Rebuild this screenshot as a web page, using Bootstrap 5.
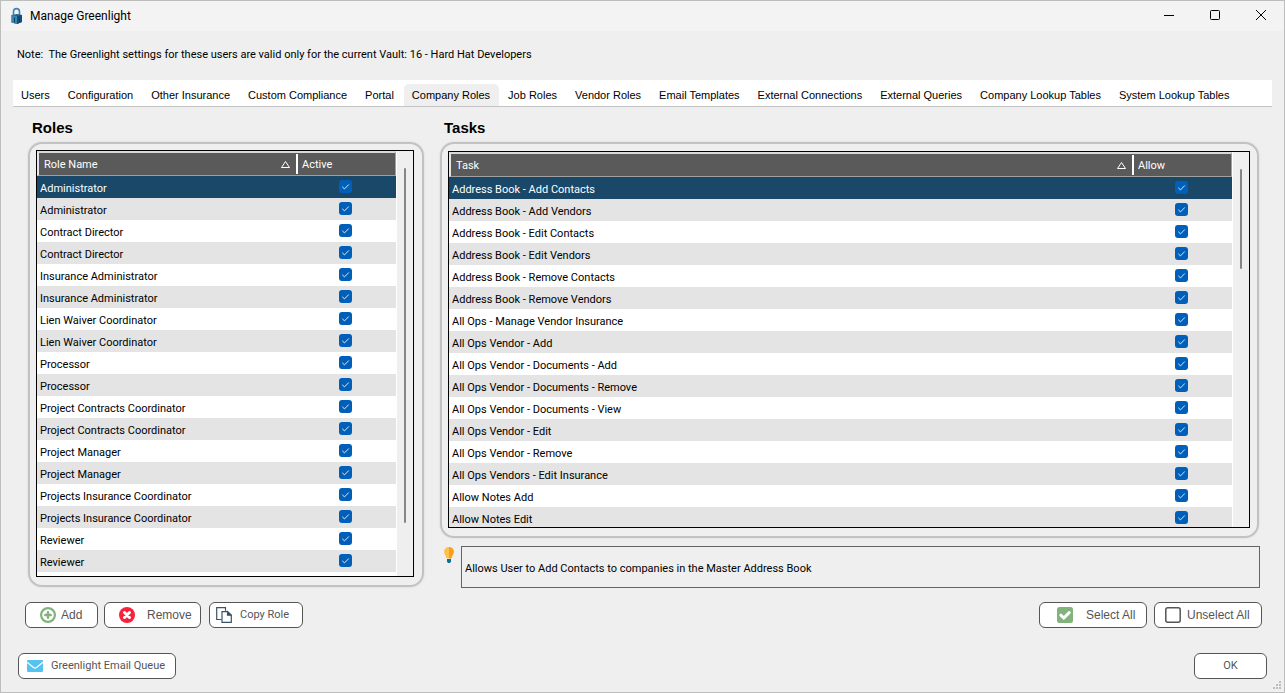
<!DOCTYPE html>
<html lang="en">
<head>
<meta charset="utf-8">
<meta name="viewport" content="width=device-width, initial-scale=1">
<title>Manage Greenlight</title>
<link href="https://cdn.jsdelivr.net/npm/bootstrap@5.3.0/dist/css/bootstrap.min.css" rel="stylesheet">
<style>
body { font-family: Roboto, "Liberation Sans", sans-serif; font-size: 11px; line-height: 16px; color: #000; background: #efefef; }
.app-window { border: 1px solid #bdbdbd; }
.title-strip { background: #f3f3f3; height: 30px; }
.app-name { font-size: 12px; font-weight: 400; line-height: 16px; margin-left: 6px; }
.win-btn { width: 46px; height: 30px; border: 0; background: none; padding: 0; display: flex; align-items: center; justify-content: center; }
.note { padding: 16px 16px 17px; }
.tab-strip { margin: 0 12px; background: #fff; border-bottom: 1px solid #c4c4c4; font-family: "Liberation Sans", sans-serif; }
.tab-strip .nav-link { color: #000; border: 0; border-radius: 5px 5px 0 0; padding: 3px 9px 3px 8px; margin-top: 4px; margin-right: 1px; font-size: 11px; }
.tab-strip .nav-link.active { background: #efefef; color: #000; }
.panes { display: grid; grid-template-columns: minmax(0, 396fr) minmax(0, 820fr); column-gap: 16px; padding: 11px 24px 0 27px; min-height: 0; }
.pane { min-height: 0; }
.pane h2 { font-family: "Liberation Sans", sans-serif; font-size: 15px; font-weight: 700; line-height: 20px; margin: 0 0 4px 4px; }
.group-box { border: 2px solid #c2c2c2; border-radius: 14px; box-shadow: 0 0 2px #d0d0d0; padding: 6px 8px 8px 6px; min-height: 0; }
.roles-box { margin-bottom: 1px; }
.tasks-box { padding-top: 7px; padding-right: 7px; margin-right: 1px; }
.grid-frame { border: 1px solid #000; background: #fff; min-height: 0; }
.grid-body { min-height: 0; margin-right: 1px; }
.data-grid { width: 100%; border-collapse: separate; border-spacing: 0; table-layout: fixed; }
.data-grid th { height: 25px; padding: 2px 7px 0; font-weight: 400; color: #fff; background: #5a5a5a; border-top: 2px solid #d9d9d9; border-bottom: 1px solid #a0a0a0; }
.data-grid th:first-child { border-left: 2px solid #e6e6e6; padding: 2px 6px 0 5px; }
.data-grid th:last-child { padding: 0; border-right: 1px solid #a0a0a0; }
.data-grid .flag-col { width: 100px; }
.col-rule { width: 2px; height: 20px; background: #fff; margin-right: 4px; }
.flag-name { padding-top: 2px; }
.data-grid td { height: 22px; padding: 3px 0 0 3px; line-height: 16px; white-space: nowrap; vertical-align: middle; }
.data-grid td label { display: block; }
.data-grid td:last-child { padding: 0 2px 1px 0; text-align: center; }
.data-grid tbody tr:nth-child(even) { background: #e4e4e4; }
.data-grid tbody tr.chosen { background: #1a4868; color: #fff; }
.data-grid .form-check-input { display: block; width: 13px; height: 13px; margin: 0 auto; border-radius: 3px; border: 0; float: none; }
.data-grid .form-check-input:checked { background-color: #005fb8; background-size: 13px; background-image: url("data:image/svg+xml,%3csvg xmlns='http://www.w3.org/2000/svg' viewBox='0 0 13 13'%3e%3cpath d='M3.3 6.8l2.2 2.1 4.3-4.4' fill='none' stroke='%23fff' stroke-opacity='.85'/%3e%3c/svg%3e"); }
.scroll-track { width: 16px; background: #efefef; padding: 17px 7px 0; flex: none; }
.scroll-thumb { width: 2px; background: #858585; border-radius: 1px; }
.hint { margin-top: 8px; }
.hint svg { width: 16px; flex: none; }
.hint-text { border: 1px solid #646464; padding: 14px 3px 10px; margin-left: 5px; }
.tool-btn { display: flex; align-items: center; height: 26px; padding: 0; border: 1px solid #555; border-radius: 6px; background: #fff; color: #555; font-size: 11px; line-height: 16px; white-space: nowrap; }
.tool-btn:hover { background: #f7f7f7; border-color: #555; color: #555; }
.tool-btn svg { flex: none; }
.wide-face { font-family: "Liberation Sans", sans-serif; font-size: 12px; }
.w-add { width: 73px; padding-left: 14px; gap: 5px; margin-right: 6px; }
.w-remove { width: 97px; padding-left: 14px; gap: 12px; }
.w-copy { width: 94px; padding-left: 6px; gap: 8px; }
.w-select { width: 108px; padding-left: 17px; gap: 13px; margin-right: 7px; }
.w-unselect { width: 108px; padding-left: 10px; gap: 6px; }
.w-queue { width: 158px; padding-left: 8px; gap: 8px; }
.w-ok { width: 73px; justify-content: center; }
.actions { padding: 14px 22px 25px 24px; }
.footer-row { padding: 0 17px 13px; }
.size-grip { right: 3px; bottom: 3px; }
</style>
</head>
<body>
<div class="app-window d-flex flex-column vh-100 position-relative">
  <header class="title-strip d-flex align-items-center flex-shrink-0">
    <svg class="ms-2" width="15" height="18" viewBox="0 0 15 18" aria-hidden="true">
      <path d="M4.500 9V4.800Q4.500 1.600 7.500 1.600T10.500 4.800V9" fill="none" stroke="#3d86b2" stroke-width="1.600"/>
      <path d="M2.500 8L8 7l5 1v7L8 17l-5.500-1.500z" fill="#20628f"/>
      <path d="M2.500 8L8 9v8l-5.500-1.500z" fill="#3a86b4"/>
      <path d="M8 9l5-1v7l-5 2z" fill="#174d75"/>
      <path d="M5.500 10.500v5M10.500 10v5" stroke="#0f3f64"/>
    </svg>
    <h1 class="app-name mb-0">Manage Greenlight</h1>
    <div class="d-flex ms-auto">
      <button type="button" class="win-btn" aria-label="Minimize"><svg width="12" height="12"><path d="M1 5.500h10" stroke="#000"/></svg></button>
      <button type="button" class="win-btn" aria-label="Maximize"><svg width="12" height="12"><rect x="1.500" y=".5" width="9" height="9" rx="1" fill="none" stroke="#000"/></svg></button>
      <button type="button" class="win-btn" aria-label="Close"><svg width="12" height="12"><path d="M1 0l10 10M11 0L1 10" stroke="#000"/></svg></button>
    </div>
  </header>

  <p class="note mb-0 flex-shrink-0">Note:&nbsp; The Greenlight settings for these users are valid only for the current Vault: 16 - Hard Hat Developers</p>

  <nav class="tab-strip nav flex-shrink-0">
    <a class="nav-link" href="#">Users</a>
    <a class="nav-link" href="#">Configuration</a>
    <a class="nav-link" href="#">Other Insurance</a>
    <a class="nav-link" href="#">Custom Compliance</a>
    <a class="nav-link" href="#">Portal</a>
    <a class="nav-link active" href="#" aria-current="page">Company Roles</a>
    <a class="nav-link" href="#">Job Roles</a>
    <a class="nav-link" href="#">Vendor Roles</a>
    <a class="nav-link" href="#">Email Templates</a>
    <a class="nav-link" href="#">External Connections</a>
    <a class="nav-link" href="#">External Queries</a>
    <a class="nav-link" href="#">Company Lookup Tables</a>
    <a class="nav-link" href="#">System Lookup Tables</a>
  </nav>

  <main class="panes flex-grow-1">
    <section class="pane d-flex flex-column">
      <h2>Roles</h2>
      <div class="group-box roles-box d-flex flex-grow-1">
        <div class="grid-frame d-flex flex-grow-1 overflow-hidden">
          <div class="grid-body flex-grow-1 overflow-hidden">
            <table class="data-grid">
              <thead><tr>
                <th><div class="d-flex justify-content-between align-items-center">Role Name<svg width="9" height="8" viewBox="0 0 9 8"><path d="M.5 6.500L4.500.5l4 6z" fill="none" stroke="#fff"/></svg></div></th>
                <th class="flag-col"><div class="d-flex align-items-center"><span class="col-rule"></span><span class="flag-name">Active</span></div></th>
              </tr></thead>
              <tbody id="roles"></tbody>
            </table>
          </div>
          <div class="scroll-track"><div class="scroll-thumb" style="height: 87%"></div></div>
        </div>
      </div>
    </section>

    <section class="pane d-flex flex-column">
      <h2>Tasks</h2>
      <div class="group-box tasks-box d-flex flex-grow-1">
        <div class="grid-frame d-flex flex-grow-1 overflow-hidden">
          <div class="grid-body flex-grow-1 overflow-hidden">
            <table class="data-grid">
              <thead><tr>
                <th><div class="d-flex justify-content-between align-items-center">Task<svg width="9" height="8" viewBox="0 0 9 8"><path d="M.5 6.500L4.500.5l4 6z" fill="none" stroke="#fff"/></svg></div></th>
                <th class="flag-col"><div class="d-flex align-items-center"><span class="col-rule"></span><span class="flag-name">Allow</span></div></th>
              </tr></thead>
              <tbody id="tasks"></tbody>
            </table>
          </div>
          <div class="scroll-track"><div class="scroll-thumb" style="height: 28%"></div></div>
        </div>
      </div>
      <div class="hint d-flex">
        <svg height="18" viewBox="0 0 16 18" aria-hidden="true">
          <path d="M9 1C6 1 4 3.200 4 5.800c0 2.400 2 3.600 2.500 6.700H9z" fill="#ffc14d"/>
          <path d="M9 1c3 0 5 2.200 5 4.800 0 2.400-2 3.600-2.500 6.700H9z" fill="#f9a11b"/>
          <path d="M7 13h4v2.500L10 17H8l-1-1.500z" fill="#0a7196"/>
        </svg>
        <div class="hint-text flex-grow-1">Allows User to Add Contacts to companies in the Master Address Book</div>
      </div>
    </section>
  </main>

  <div class="actions d-flex flex-shrink-0">
    <button type="button" class="btn tool-btn wide-face w-add">
      <svg width="16" height="16" viewBox="0 0 16 16"><circle cx="8" cy="8" r="6.900" fill="none" stroke="#82b37c" stroke-width="2.200"/><path d="M8 5.200v5.600M5.200 8h5.600" stroke="#82b37c" stroke-width="2.400" stroke-linecap="round"/></svg>Add</button>
    <button type="button" class="btn tool-btn wide-face w-remove">
      <svg width="16" height="16" viewBox="0 0 16 16"><circle cx="8" cy="8" r="8" fill="#f8213a"/><path d="M5.500 5.500l5 5M10.500 5.500l-5 5" stroke="#fff" stroke-width="3" stroke-linecap="round"/></svg>Remove</button>
    <button type="button" class="btn tool-btn w-copy ms-2">
      <svg width="16" height="16" viewBox="0 0 16 16" fill="none" stroke="#3b5468" stroke-width="1.200"><path d="M5.500 12.500H.7V.7h8.800v3"/><path d="M6 4.600h5.500l3.800 3.600v7.100H6z" fill="#fff"/><path d="M11.500 4.600v3.600h3.800z" fill="#1a4868"/></svg>Copy Role</button>
    <button type="button" class="btn tool-btn wide-face w-select ms-auto">
      <svg width="16" height="16" viewBox="0 0 16 16"><rect width="16" height="16" rx="2.500" fill="#82b37c"/><path d="M3.800 8.200l3 2.800 5.400-5.400" fill="none" stroke="#fff" stroke-width="3" stroke-linecap="round"/></svg>Select All</button>
    <button type="button" class="btn tool-btn wide-face w-unselect">
      <svg width="16" height="16" viewBox="0 0 16 16"><rect x=".8" y=".8" width="14.400" height="14.400" rx="2" fill="#fff" stroke="#555" stroke-width="1.500"/></svg>Unselect All</button>
  </div>

  <footer class="footer-row d-flex justify-content-between flex-shrink-0">
    <button type="button" class="btn tool-btn w-queue">
      <svg width="16" height="12" viewBox="0 0 16 12"><rect width="16" height="12" rx="1" fill="#55c3f1"/><path d="M0 2.200L6.500 7.500q1.500 1 3 0L16 2.200" fill="none" stroke="#fff" stroke-width="1.300"/></svg>Greenlight Email Queue</button>
    <button type="button" class="btn tool-btn w-ok">OK</button>
  </footer>
  <svg class="size-grip position-absolute" width="8" height="8" fill="#bdbdbd" aria-hidden="true"><path d="M6 0h2v2H6zM3 3h2v2H3zM6 3h2v2H6zM0 6h2v2H0zM3 6h2v2H3zM6 6h2v2H6z"/></svg>
</div>
<script src="https://cdn.jsdelivr.net/npm/bootstrap@5.3.0/dist/js/bootstrap.bundle.min.js"></script>
<script>
const roles = ["Administrator", "Contract Director", "Insurance Administrator", "Lien Waiver Coordinator", "Processor",
  "Project Contracts Coordinator", "Project Manager", "Projects Insurance Coordinator", "Reviewer"].flatMap(name => [name, name]);
const tasks = ["Address Book - Add Contacts", "Address Book - Add Vendors", "Address Book - Edit Contacts", "Address Book - Edit Vendors",
  "Address Book - Remove Contacts", "Address Book - Remove Vendors", "All Ops - Manage Vendor Insurance", "All Ops Vendor - Add",
  "All Ops Vendor - Documents - Add", "All Ops Vendor - Documents - Remove", "All Ops Vendor - Documents - View", "All Ops Vendor - Edit",
  "All Ops Vendor - Remove", "All Ops Vendors - Edit Insurance", "Allow Notes Add", "Allow Notes Edit"];
function fill(id, names) {
  document.getElementById(id).innerHTML = names.map((name, i) =>
    `<tr${i ? "" : ' class="chosen"'}><td><label for="${id}-${i}">${name}</label></td>` +
    `<td><input class="form-check-input" type="checkbox" id="${id}-${i}" checked></td></tr>`).join("");
}
fill("roles", roles);
fill("tasks", tasks);
</script>
</body>
</html>
